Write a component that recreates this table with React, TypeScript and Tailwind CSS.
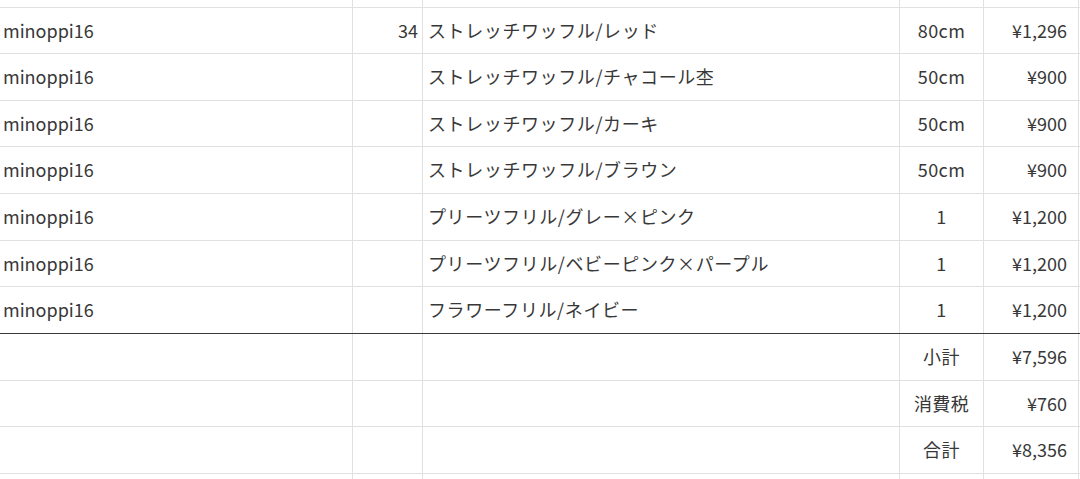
const rows = [
  { user: 'minoppi16', num: '34', name: 'ストレッチワッフル/レッド', size: '80cm', price: '¥1,296', h: 'h-[46px]' },
  { user: 'minoppi16', num: '', name: 'ストレッチワッフル/チャコール杢', size: '50cm', price: '¥900', h: 'h-[47px]' },
  { user: 'minoppi16', num: '', name: 'ストレッチワッフル/カーキ', size: '50cm', price: '¥900', h: 'h-[46px]' },
  { user: 'minoppi16', num: '', name: 'ストレッチワッフル/ブラウン', size: '50cm', price: '¥900', h: 'h-[47px]' },
  { user: 'minoppi16', num: '', name: 'プリーツフリル/グレー×ピンク', size: '1', price: '¥1,200', h: 'h-[47px]' },
  { user: 'minoppi16', num: '', name: 'プリーツフリル/ベビーピンク×パープル', size: '1', price: '¥1,200', h: 'h-[46px]' },
  { user: 'minoppi16', num: '', name: 'フラワーフリル/ネイビー', size: '1', price: '¥1,200', h: 'h-[47px]' },
];

const totals = [
  { label: '小計', value: '¥7,596', h: 'h-[47px]' },
  { label: '消費税', value: '¥760', h: 'h-[46px]' },
  { label: '合計', value: '¥8,356', h: 'h-[47px]' },
];

const Row = ({ h, a, b, c, d, e, dark }: { h: string; a?: string; b?: string; c?: string; d?: string; e?: string; dark?: boolean }) => (
  <div className={`flex ${h} border-b ${dark ? 'border-[#3a3a3a]' : 'border-[#e0e0e0]'}`}>
    <div className="w-[353px] shrink-0 border-r border-[#e0e0e0] flex items-center pl-[3px] pb-[2px]">{a}</div>
    <div className="w-[70px] shrink-0 border-r border-[#e0e0e0] flex items-center justify-end pr-[4px] pb-[2px]">{b}</div>
    <div className="w-[477px] shrink-0 border-r border-[#e0e0e0] flex items-center pl-[5px] pb-[2px] tracking-[0.6px]">{c}</div>
    <div className="w-[84px] shrink-0 border-r border-[#e0e0e0] flex items-center justify-center pb-[2px] tracking-[0.4px]">{d}</div>
    <div className="w-[95px] shrink-0 border-r border-[#e0e0e0] flex items-center justify-end pr-[11px] pb-[2px]">{e}</div>
    <div className="grow" />
  </div>
);

export default function App() {
  return (
    <div
      className="w-[1080px] h-[479px] overflow-hidden bg-white text-[#383838] text-[18px] leading-none"
      style={{ fontFamily: '"Noto Sans CJK JP", "Noto Sans", sans-serif' }}
    >
      <Row h="h-[8px]" />
      {rows.map((r, i) => (
        <Row key={i} h={r.h} a={r.user} b={r.num} c={r.name} d={r.size} e={r.price} dark={i === rows.length - 1} />
      ))}
      {totals.map((t, i) => (
        <Row key={i} h={t.h} d={t.label} e={t.value} />
      ))}
      <Row h="h-[10px]" />
    </div>
  );
}
